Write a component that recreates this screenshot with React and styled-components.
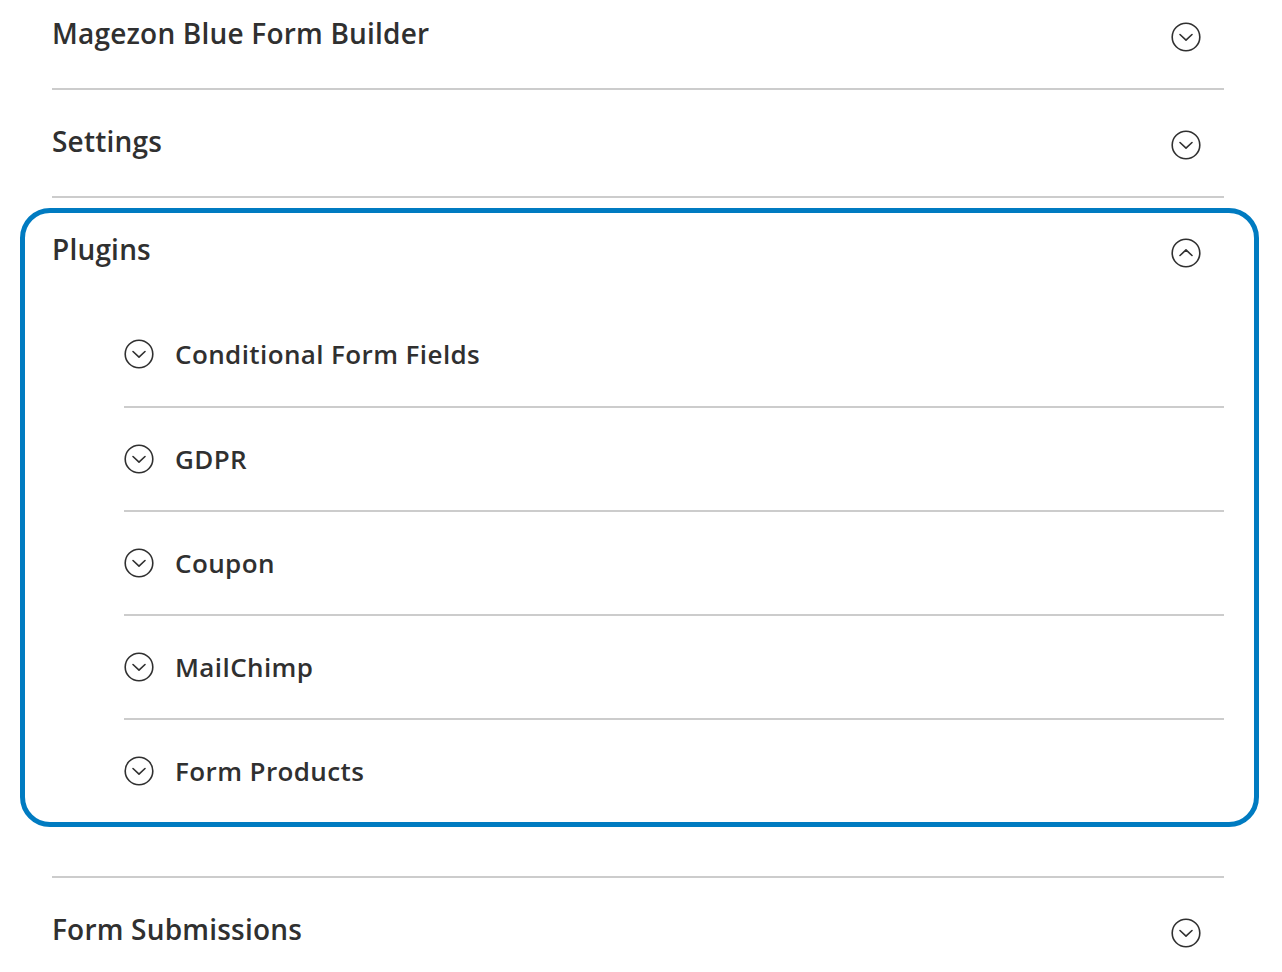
import React from "react";
import styled, { createGlobalStyle } from "styled-components";

const GlobalStyle = createGlobalStyle`
  body {
    margin: 0;
    background: #ffffff;
    font-family: "Open Sans", "Liberation Sans", sans-serif;
    color: #303030;
  }
`;

const Page = styled.div`
  padding: 0 58px 0 52px;
  overflow: hidden;
`;

const Section = styled.div`
  border-bottom: 2px solid #cccccc;
  padding: ${(p) => (p.$box ? "10px 0 49px" : "0")};
`;

const Header = styled.div`
  display: flex;
  align-items: flex-start;
  justify-content: space-between;
  padding: ${(p) => (p.$first ? "15px" : "33px")} 23px 37px 0;
`;

const Title = styled.h2`
  margin: 0;
  font-size: 28px;
  line-height: 36px;
  font-weight: 600;
  letter-spacing: 0.2px;
  color: #303030;
`;

const Toggle = styled.span`
  display: flex;
  height: 30px;
  margin: 7px 0 -1px;
`;

const Highlight = styled.div`
  margin: 0 -35px 0 -32px;
  border: 5px solid #007bc1;
  border-radius: 30px;
  padding: 0 30px 0 27px;
`;

const BoxHeader = styled(Header)`
  padding-top: 18px;
  padding-bottom: 36px;
`;

const SubList = styled.div`
  margin-left: 72px;
`;

const SubRow = styled.div`
  display: flex;
  align-items: center;
  gap: 21px;
  padding: 33px 0;
  border-bottom: 2px solid #cccccc;
  &:first-child {
    padding-top: 33px;
    padding-bottom: 34px;
  }
  &:last-child {
    border-bottom: none;
  }
`;

const SubTitle = styled.span`
  font-size: 26px;
  line-height: 36px;
  font-weight: 600;
  letter-spacing: 0.4px;
  color: #303030;
`;

function Chevron({ up }) {
  return (
    <svg width="30" height="30" viewBox="0 0 30 30">
      <circle cx="15" cy="15" r="13.8" fill="none" stroke="#303030" strokeWidth="1.6" />
      <path
        d={up ? "M9 17.5 L15 11.8 L21 17.5" : "M9 12.5 L15 18.2 L21 12.5"}
        fill="none"
        stroke="#303030"
        strokeWidth="1.6"
        strokeLinecap="round"
        strokeLinejoin="round"
      />
    </svg>
  );
}

const plugins = ["Conditional Form Fields", "GDPR", "Coupon", "MailChimp", "Form Products"];

function App() {
  return (
    <>
      <GlobalStyle />
      <Page>
        <Section>
          <Header $first>
            <Title>Magezon Blue Form Builder</Title>
            <Toggle>
              <Chevron />
            </Toggle>
          </Header>
        </Section>
        <Section>
          <Header>
            <Title>Settings</Title>
            <Toggle>
              <Chevron />
            </Toggle>
          </Header>
        </Section>
        <Section $box>
          <Highlight>
            <BoxHeader>
              <Title>Plugins</Title>
              <Toggle>
                <Chevron up />
              </Toggle>
            </BoxHeader>
            <SubList>
              {plugins.map((name) => (
                <SubRow key={name}>
                  <Chevron />
                  <SubTitle>{name}</SubTitle>
                </SubRow>
              ))}
            </SubList>
          </Highlight>
        </Section>
        <Section>
          <Header>
            <Title>Form Submissions</Title>
            <Toggle>
              <Chevron />
            </Toggle>
          </Header>
        </Section>
      </Page>
    </>
  );
}

export default App;
